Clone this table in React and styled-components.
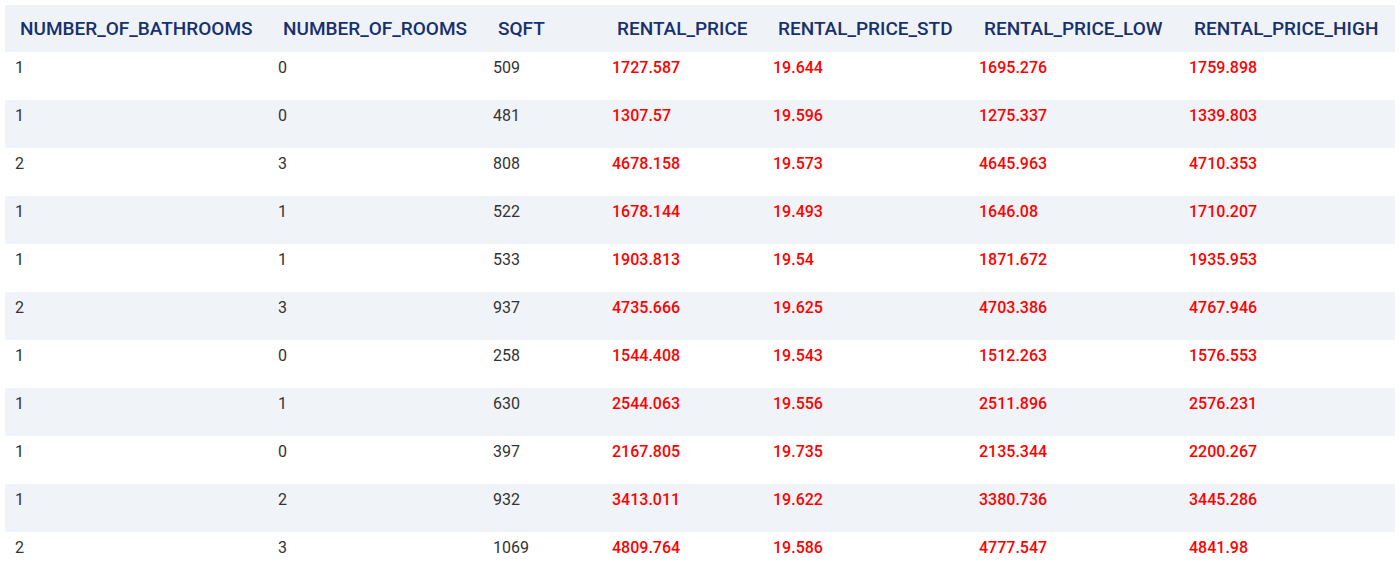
import React from "react";
import styled, { createGlobalStyle } from "styled-components";

const GlobalStyle = createGlobalStyle`
  body {
    margin: 0;
    background: #ffffff;
    font-family: Roboto, "Liberation Sans", sans-serif;
  }
`;

const columns = [
  { key: "bath", label: "NUMBER_OF_BATHROOMS", width: 263 },
  { key: "rooms", label: "NUMBER_OF_ROOMS", width: 215 },
  { key: "sqft", label: "SQFT", width: 119 },
  { key: "price", label: "RENTAL_PRICE", width: 161, red: true },
  { key: "std", label: "RENTAL_PRICE_STD", width: 206, red: true },
  { key: "low", label: "RENTAL_PRICE_LOW", width: 210, red: true },
  { key: "high", label: "RENTAL_PRICE_HIGH", width: 216, red: true },
];

const rows = [
  [1, 0, 509, "1727.587", "19.644", "1695.276", "1759.898"],
  [1, 0, 481, "1307.57", "19.596", "1275.337", "1339.803"],
  [2, 3, 808, "4678.158", "19.573", "4645.963", "4710.353"],
  [1, 1, 522, "1678.144", "19.493", "1646.08", "1710.207"],
  [1, 1, 533, "1903.813", "19.54", "1871.672", "1935.953"],
  [2, 3, 937, "4735.666", "19.625", "4703.386", "4767.946"],
  [1, 0, 258, "1544.408", "19.543", "1512.263", "1576.553"],
  [1, 1, 630, "2544.063", "19.556", "2511.896", "2576.231"],
  [1, 0, 397, "2167.805", "19.735", "2135.344", "2200.267"],
  [1, 2, 932, "3413.011", "19.622", "3380.736", "3445.286"],
  [2, 3, 1069, "4809.764", "19.586", "4777.547", "4841.98"],
];

export default function App() {
  return (
    <>
      <GlobalStyle />
      <Page>
        <Table>
          <colgroup>
            {columns.map((c) => (
              <col key={c.key} style={{ width: c.width }} />
            ))}
          </colgroup>
          <thead>
            <HeadRow>
              {columns.map((c) => (
                <HeadCell key={c.key}>{c.label}</HeadCell>
              ))}
            </HeadRow>
          </thead>
          <tbody>
            {rows.map((r, i) => (
              <Row key={i} $striped={i % 2 === 1}>
                {r.map((v, j) => (
                  <Cell key={j} $red={columns[j].red}>
                    {v}
                  </Cell>
                ))}
              </Row>
            ))}
          </tbody>
        </Table>
      </Page>
    </>
  );
}

const Page = styled.div`
  padding: 5px;
`;

const Table = styled.table`
  width: 1390px;
  table-layout: fixed;
  border-collapse: collapse;
  border-spacing: 0;
`;

const HeadRow = styled.tr`
  background: #eff3f7;
`;

const HeadCell = styled.th`
  height: 47px;
  padding: 0 0 0 15px;
  text-align: left;
  vertical-align: middle;
  font-size: 19px;
  font-weight: 500;
  color: #17306e;
  white-space: nowrap;
  box-sizing: border-box;
`;

const Row = styled.tr`
  background: ${(p) => (p.$striped ? "#f0f4f8" : "#ffffff")};
`;

const Cell = styled.td`
  height: 48px;
  padding: 6px 0 0 10px;
  box-sizing: border-box;
  vertical-align: top;
  font-size: 16px;
  line-height: 19px;
  font-weight: ${(p) => (p.$red ? 500 : 400)};
  color: ${(p) => (p.$red ? "#ff0000" : "#333333")};
  white-space: nowrap;
`;
